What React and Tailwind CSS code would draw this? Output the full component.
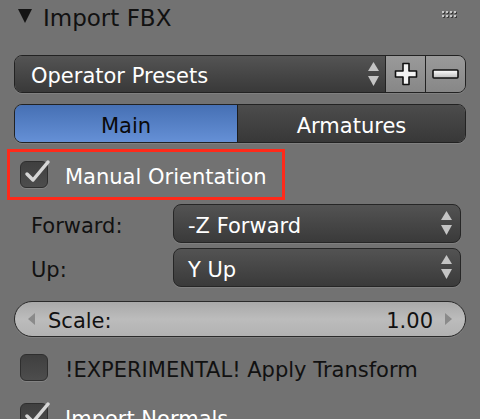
import React from "react";

const UpDown = ({ className = "" }) => (
  <svg width="11" height="25" viewBox="0 0 11 25" className={className}>
    <polygon points="5.5,0 11,9 0,9" fill="#c4c4c4" />
    <polygon points="0,14 11,14 5.5,24" fill="#c4c4c4" />
  </svg>
);

const Check = () => (
  <svg width="30" height="30" viewBox="0 0 30 30" className="absolute -top-[5px] left-0">
    <polyline
      points="6,17 12,23 27,5"
      fill="none"
      stroke="#d6d6d6"
      strokeWidth="3.5"
      strokeLinecap="round"
      strokeLinejoin="round"
    />
  </svg>
);

const CheckBox = ({ checked }) => (
  <div className="relative w-[28px] h-[27px] shrink-0 rounded-[6px] border border-[#2e2e2e] bg-gradient-to-b from-[#3f3f3f] to-[#4d4d4d] shadow-[0_1px_0_rgba(255,255,255,0.12)]">
    {checked && <Check />}
  </div>
);

// text nudged down a bit so the caps sit centred like Blender's
const T = ({ className = "", children }) => (
  <span className={`pt-[5px] ${className}`}>{children}</span>
);

const Dropdown = ({ label }) => (
  <div className="flex-1 h-[39px] flex items-center justify-between pl-[14px] pr-[8px] rounded-[8px] border border-[#262626] bg-gradient-to-b from-[#535353] to-[#3a3a3a] text-white shadow-[0_1px_0_rgba(255,255,255,0.1)]">
    <T>{label}</T>
    <UpDown />
  </div>
);

const Handle = () => (
  <svg width="16" height="9" viewBox="0 0 16 9">
    {[0, 4, 8, 12].map((x) =>
      [0, 4].map((y) => (
        <g key={`${x}-${y}`}>
          <rect x={x + 1} y={y + 1} width="2" height="2" fill="#3a3a3a" />
          <rect x={x} y={y} width="2" height="2" fill="#c8c8c8" />
        </g>
      ))
    )}
  </svg>
);

export default function App() {
  return (
    <div className="w-[480px] h-[419px] overflow-hidden bg-[#727272] font-['DejaVu_Sans',sans-serif] text-[21px] leading-none text-[#111]">
      {/* Panel header */}
      <div className="h-[40px] flex items-center pl-[18px] pr-[22px]">
        <svg width="14" height="14" viewBox="0 0 14 14" className="mb-[8px]">
          <polygon points="0,0 14,0 7,14" fill="#141414" />
        </svg>
        <span className="ml-[11px] text-[23px] mb-[3px]">Import FBX</span>
        <div className="ml-auto mb-[9px]">
          <Handle />
        </div>
      </div>

      {/* Operator presets */}
      <div className="mx-[14px] mt-[15px] h-[38px] flex rounded-[8px] border border-[#222] overflow-hidden shadow-[0_1px_0_rgba(255,255,255,0.1)]">
        <div className="flex-1 flex items-center justify-between pl-[16px] pr-[6px] bg-gradient-to-b from-[#545454] to-[#393939] text-white">
          <T>Operator Presets</T>
          <UpDown />
        </div>
        <div className="w-[40px] flex items-center justify-center border-l border-[#222] bg-gradient-to-b from-[#9a9a9a] to-[#878787]">
          <svg width="24" height="24" viewBox="0 0 24 24">
            <path
              d="M9 1.5 H15 V9 H22.5 V15 H15 V22.5 H9 V15 H1.5 V9 H9 Z"
              fill="#f4f4f4"
              stroke="#111"
              strokeWidth="1.6"
              strokeLinejoin="round"
            />
          </svg>
        </div>
        <div className="w-[40px] flex items-center justify-center border-l border-[#222] bg-gradient-to-b from-[#9a9a9a] to-[#878787]">
          <svg width="27" height="10" viewBox="0 0 27 10">
            <defs>
              <linearGradient id="mg" x1="0" y1="0" x2="0" y2="1">
                <stop offset="0" stopColor="#ffffff" />
                <stop offset="1" stopColor="#bdbdbd" />
              </linearGradient>
            </defs>
            <rect x="1" y="1" width="25" height="8" rx="1" fill="url(#mg)" stroke="#111" strokeWidth="1.6" />
          </svg>
        </div>
      </div>

      {/* Tabs */}
      <div className="mx-[14px] mt-[11px] h-[39px] flex rounded-[8px] border border-[#222] overflow-hidden shadow-[0_1px_0_rgba(255,255,255,0.1)]">
        <div className="w-[222px] flex items-center justify-center bg-gradient-to-b from-[#4670b4] to-[#6590d6] text-[#0a0a0a]">
          <T>Main</T>
        </div>
        <div className="flex-1 flex items-center justify-center border-l border-[#1c1c1c] bg-gradient-to-b from-[#4c4c4c] to-[#383838] text-white">
          <T>Armatures</T>
        </div>
      </div>

      {/* Highlighted option */}
      <div className="ml-[7px] mt-[6px] w-[278px] h-[51px] border-[3px] border-[#ff2a1a] flex items-center pl-[10px]">
        <CheckBox checked />
        <T className="ml-[17px] text-white">Manual Orientation</T>
      </div>

      {/* Axis rows */}
      <div className="mt-[4px] flex flex-col gap-[5px]">
        <div className="flex items-center pr-[19px]">
          <T className="w-[173px] pl-[31px]">Forward:</T>
          <Dropdown label="-Z Forward" />
        </div>
        <div className="flex items-center pr-[19px]">
          <T className="w-[173px] pl-[31px]">Up:</T>
          <Dropdown label="Y Up" />
        </div>
      </div>

      {/* Scale slider */}
      <div className="mx-[14px] mt-[14px] h-[36px] flex items-center px-[13px] rounded-full border border-[#2a2a2a] bg-gradient-to-b from-[#a9a9a9] via-[#bcbcbc] to-[#b2b2b2] shadow-[0_1px_0_rgba(255,255,255,0.1)]">
        <svg width="7" height="12" viewBox="0 0 7 12">
          <polygon points="7,0 7,12 0,6" fill="#8a8a8a" />
        </svg>
        <T className="ml-[13px]">Scale:</T>
        <T className="ml-auto">1.00</T>
        <svg width="7" height="12" viewBox="0 0 7 12" className="ml-[12px]">
          <polygon points="0,0 7,6 0,12" fill="#8a8a8a" />
        </svg>
      </div>

      {/* Options */}
      <div className="mt-[17px] flex items-center pl-[20px]">
        <CheckBox />
        <T className="ml-[17px]">!EXPERIMENTAL! Apply Transform</T>
      </div>
      <div className="mt-[22px] flex items-center pl-[20px]">
        <CheckBox checked />
        <T className="ml-[17px] text-white">Import Normals</T>
      </div>
    </div>
  );
}
